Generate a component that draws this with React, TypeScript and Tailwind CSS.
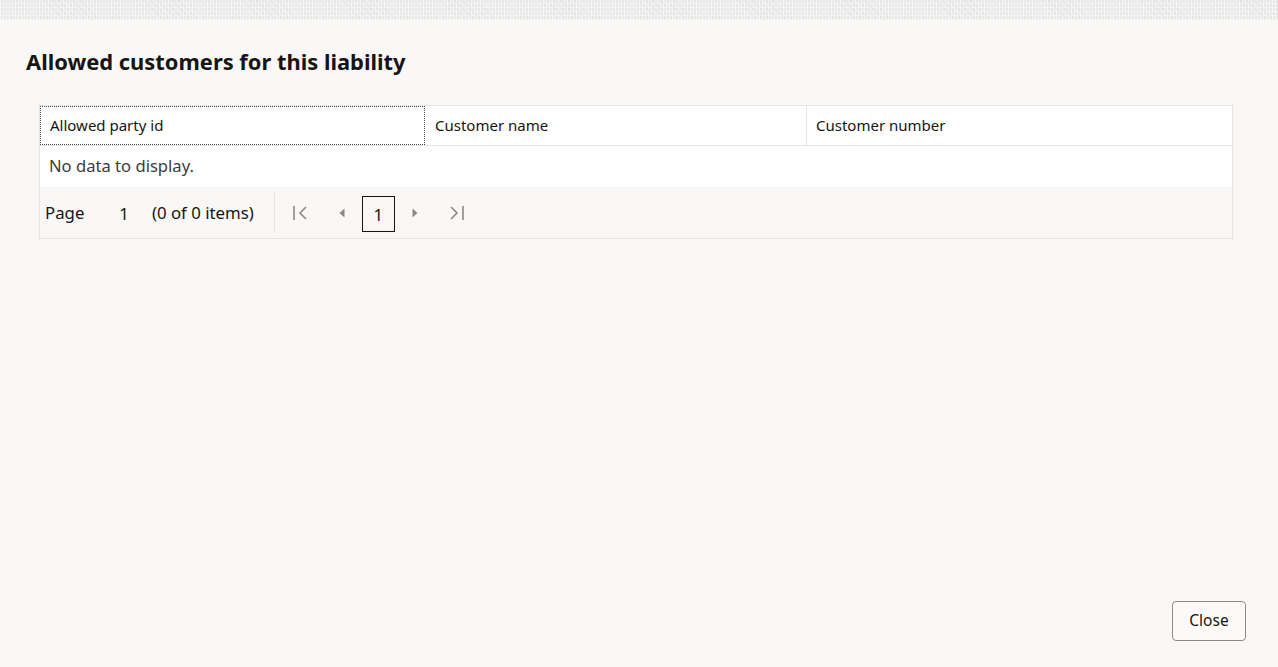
import React from "react";

export default function App() {
  return (
    <div
      className="w-[1278px] h-[667px] bg-[#f9f8f6] flex flex-col overflow-hidden"
      style={{ fontFamily: '"Noto Sans", "Open Sans", sans-serif' }}
    >
      <div
        className="h-[20px] shrink-0 bg-[#e9e9e8]"
        style={{
          backgroundImage:
            "repeating-linear-gradient(90deg, rgba(255,255,255,0.55) 0px, rgba(255,255,255,0.55) 1px, transparent 1px, transparent 3px), repeating-linear-gradient(0deg, rgba(255,255,255,0.4) 0px, rgba(255,255,255,0.4) 1px, transparent 1px, transparent 4px), repeating-linear-gradient(45deg, rgba(200,200,200,0.25) 0px, rgba(200,200,200,0.25) 1px, transparent 1px, transparent 5px)",
        }}
      />
      <div className="flex-1 flex flex-col px-[26px]">
        <h1 className="mt-[28px] text-[21.9px] leading-[28px] font-bold text-[#161513]">
          Allowed customers for this liability
        </h1>
        <div className="mt-[29px] ml-[13px] w-[1194px] border border-[#e5e4e2] bg-white">
          <div className="flex h-[40px] border-b border-[#e5e4e2] text-[15px] text-[#161513]">
            <div className="w-[385px] flex items-center pl-[9px] border border-dotted border-[#444]">
              Allowed party id
            </div>
            <div className="w-[382px] flex items-center pl-[10px] border-r border-[#e5e4e2]">
              Customer name
            </div>
            <div className="flex-1 flex items-center pl-[9px]">Customer number</div>
          </div>
          <div className="h-[41px] flex items-center pl-[9px] text-[16.6px] text-[#3d3c3a]">
            No data to display.
          </div>
          <div className="h-[51px] bg-[#f9f8f6] flex items-center text-[16.8px] text-[#161513]">
            <span className="ml-[5px]">Page</span>
            <span className="ml-[35px] mt-[3px]">1</span>
            <span className="ml-[23px]">(0 of 0 items)</span>
            <div className="ml-[20px] w-px h-[40px] bg-[#e5e4e2]" />
            <svg className="ml-[17px]" width="16" height="18" viewBox="0 0 16 18" fill="none" stroke="#8a8987" strokeWidth="1.6">
              <path d="M2 2 V16" />
              <path d="M14 3 L8 9 L14 15" />
            </svg>
            <svg className="ml-[30px]" width="8" height="12" viewBox="0 0 8 12">
              <path d="M6.5 1.5 L1.5 6 L6.5 10.5 Z" fill="#8a8987" />
            </svg>
            <div className="ml-[16px] w-[33px] h-[36px] border border-[#161513] flex items-center justify-center mt-[2px] pt-[3px]">
              1
            </div>
            <svg className="ml-[16px]" width="8" height="12" viewBox="0 0 8 12">
              <path d="M1.5 1.5 L6.5 6 L1.5 10.5 Z" fill="#8a8987" />
            </svg>
            <svg className="ml-[30px]" width="16" height="18" viewBox="0 0 16 18" fill="none" stroke="#8a8987" strokeWidth="1.6">
              <path d="M2 3 L8 9 L2 15" />
              <path d="M14 2 V16" />
            </svg>
          </div>
        </div>
        <div className="flex-1" />
        <div className="flex justify-end mb-[26px] mr-[6px]">
          <button className="w-[74px] h-[40px] rounded-[4px] border border-[#8c8b89] bg-[#fbfaf8] text-[15.5px] text-[#161513]">
            Close
          </button>
        </div>
      </div>
    </div>
  );
}
